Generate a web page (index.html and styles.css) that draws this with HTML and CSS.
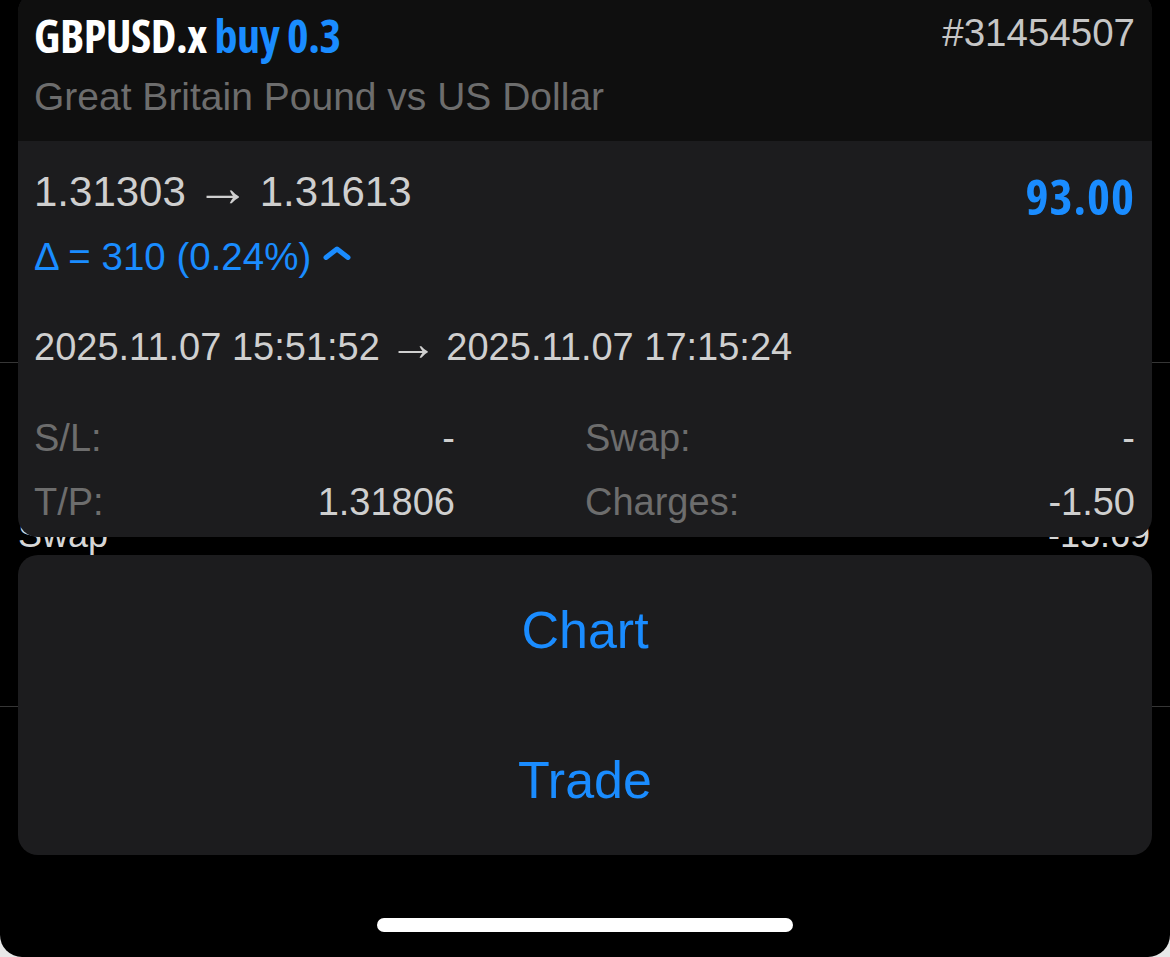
FILE: index.html
```html
<!DOCTYPE html>
<html lang="en">
<head>
  <meta charset="UTF-8" />
  <meta name="viewport" content="width=device-width, initial-scale=1.0" />
  <title>GBPUSD.x position</title>
  <link rel="stylesheet" href="styles.css">
</head>
<body>
  <div class="screen">
    <!-- list that sits behind the popup -->
    <div class="list" aria-hidden="true">
      <div class="list-row list-row-top"></div>
      <div class="list-row">
        <div class="list-line">
          <span>Swap</span>
          <span>-15.69</span>
        </div>
      </div>
    </div>

    <div class="sheet">
      <section class="position">
        <header class="position-head">
          <div class="head-top">
            <h1 class="symbol">GBPUSD.x <span class="side">buy 0.3</span></h1>
            <span class="ticket">#31454507</span>
          </div>
          <p class="desc">Great Britain Pound vs US Dollar</p>
        </header>

        <div class="position-body">
          <div class="price-row">
            <span class="prices">1.31303 <span class="arrow">&rarr;</span> 1.31613</span>
            <span class="profit">93.00</span>
          </div>
          <div class="delta">
            &Delta; = 310 (0.24%)
            <svg class="chevron" width="28" height="14" viewBox="0 0 28 14" aria-hidden="true">
              <path d="M3 11.5 L14 3 L25 11.5" fill="none" stroke="currentColor" stroke-width="5" stroke-linecap="round" stroke-linejoin="round"/>
            </svg>
          </div>
          <div class="times">2025.11.07 15:51:52 <span class="arrow">&rarr;</span> 2025.11.07 17:15:24</div>

          <dl class="stats">
            <div class="stat"><dt>S/L:</dt><dd>-</dd></div>
            <div class="stat"><dt>Swap:</dt><dd>-</dd></div>
            <div class="stat"><dt>T/P:</dt><dd>1.31806</dd></div>
            <div class="stat"><dt>Charges:</dt><dd>-1.50</dd></div>
          </dl>
        </div>
      </section>

      <nav class="actions">
        <button type="button">Chart</button>
        <button type="button">Trade</button>
      </nav>

      <div class="home-bar"></div>
    </div>
  </div>
</body>
</html>
```

FILE: styles.css
```css
:root {
  --blue: #1a8cff;
  --card: #1c1c1e;
  --head: #0f0f0f;
  --text: #cfcfcf;
  --muted: #6d6d6d;
  --font-main: 'Liberation Sans', Arial, sans-serif;
  --font-cond: 'Open Sans', 'DejaVu Sans', sans-serif;
}

html {
  background: #e8e8e8;
}

body {
  margin: 0;
  font-family: var(--font-main);
}

.screen {
  position: relative;
  height: 957px;
  background: #000;
  border-radius: 0 0 22px 22px;
  overflow: hidden;
}

/* background list */
.list-row {
  border-bottom: 1px solid #363636;
}

.list-row-top {
  height: 362px;
}

.list-row:not(.list-row-top) {
  height: 343px;
}

.list-line {
  display: flex;
  justify-content: space-between;
  padding: 150px 20px 0 18px;
  font-size: 36px;
  line-height: 44px;
  color: #d6d6d6;
}

/* popup */
.sheet {
  position: absolute;
  inset: 0;
  padding: 0 18px;
  display: flex;
  flex-direction: column;
}

.position {
  margin-top: -8px;
  border-radius: 20px;
  background: var(--card);
  overflow: hidden;
}

.position-head {
  height: 149px;
  box-sizing: border-box;
  padding: 22px 17px 0 16px;
  background: var(--head);
}

.head-top {
  display: flex;
  justify-content: space-between;
  align-items: flex-start;
}

.symbol {
  margin: -2px 0 0;
  font-family: var(--font-cond);
  font-stretch: 75%;
  font-weight: 700;
  font-size: 46px;
  line-height: 1;
  color: #fff;
  letter-spacing: -0.5px;
}

.side {
  color: var(--blue);
}

.ticket {
  font-size: 38.5px;
  line-height: 1;
  color: #c6c6c6;
}

.desc {
  margin: 19px 0 0;
  font-size: 39px;
  line-height: 1;
  color: var(--muted);
}

.position-body {
  padding: 30px 17px 16px 16px;
}

.price-row {
  display: flex;
  justify-content: space-between;
  align-items: flex-start;
}

.prices {
  font-size: 42px;
  line-height: 1;
  color: var(--text);
}

.arrow {
  font-size: 1.3em;
  line-height: 0;
  margin: 0 -2px;
}

.profit {
  margin-top: 1px;
  font-family: var(--font-cond);
  font-stretch: 75%;
  font-weight: 700;
  font-size: 49px;
  line-height: 1;
  letter-spacing: 1px;
  color: var(--blue);
}

.delta {
  display: flex;
  align-items: center;
  gap: 12px;
  margin-top: 17px;
  font-size: 38.5px;
  line-height: 1;
  color: var(--blue);
}

.chevron {
  margin-top: -8px;
}

.times {
  margin-top: 51px;
  font-size: 38px;
  line-height: 1;
  color: var(--text);
}

.stats {
  display: grid;
  grid-template-columns: 421px 1fr;
  column-gap: 130px;
  row-gap: 26px;
  margin: 53px 0 0;
}

.stat {
  display: flex;
  justify-content: space-between;
  font-size: 38px;
  line-height: 1;
}

.stat dt {
  color: var(--muted);
}

.stat dd {
  margin: 0;
  color: var(--text);
}

.actions {
  display: flex;
  flex-direction: column;
  margin-top: 18px;
  border-radius: 20px;
  background: var(--card);
  overflow: hidden;
}

.actions button {
  height: 150px;
  border: none;
  background: none;
  font-family: var(--font-main);
  font-size: 52px;
  color: var(--blue);
  cursor: pointer;
}

.home-bar {
  align-self: center;
  width: 416px;
  height: 14px;
  margin-top: 63px;
  border-radius: 7px;
  background: #fff;
}
```
